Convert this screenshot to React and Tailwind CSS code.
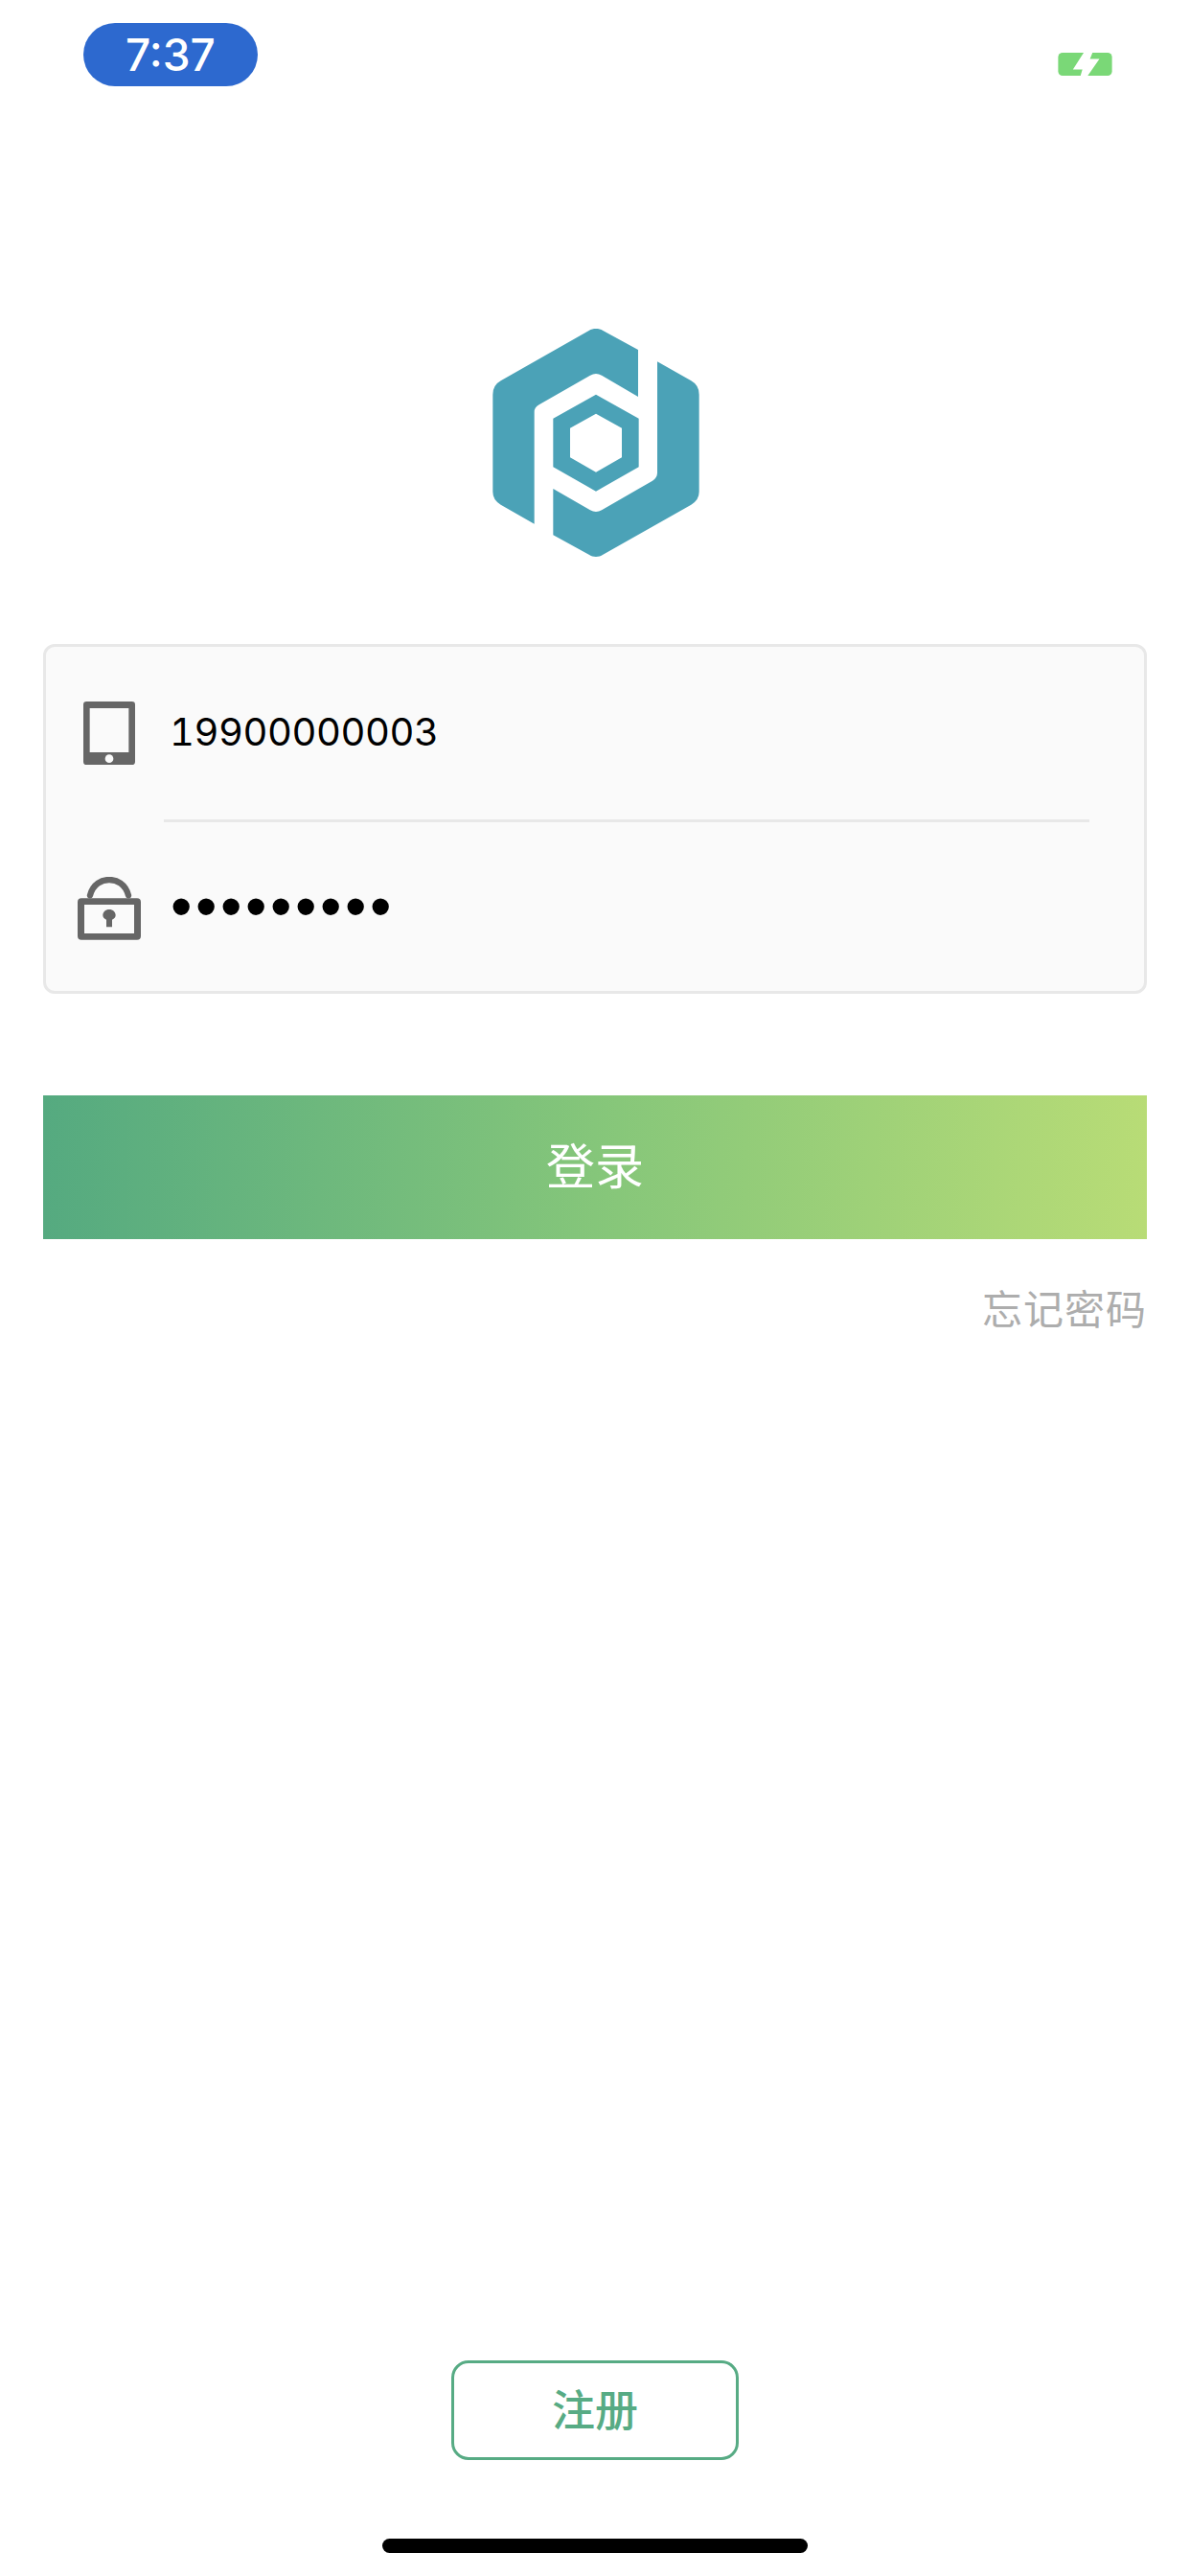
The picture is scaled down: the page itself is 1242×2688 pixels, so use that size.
import React from 'react';

const LOGO_LEFT = 'M555 135 L445 75 C432 67 414 67 401 75 L125 232 Q100 246 100 275 L100 580 Q100 606 125 620 L230 680 L230 330 Q230 315 245 307 L405 215 Q423 205 441 215 L555 282 Z';
const LOGO_RIGHT = 'M615 172 L721 232 Q746 246 746 275 L746 580 Q746 606 721 620 L445 776 C432 785 414 785 401 776 L289 715 L289 570 L405 637 Q423 647 441 637 L600 545 Q615 536 615 520 Z';
const LOGO_CORE = 'M423 275 L557 350 L557 502 L423 578 L289 502 L289 350 Z M423 335 L342 380 L342 472 L423 518 L504 472 L504 380 Z';

const Logo = () => (
  <svg viewBox="0 0 840 840" className="w-[280px] h-[280px]">
    <path d={LOGO_LEFT} fill="#4ba2b7" />
    <path d={LOGO_RIGHT} fill="#4ba2b7" />
    <path d={LOGO_CORE} fill="#4ba2b7" fillRule="evenodd" />
  </svg>
);

const Battery = () => (
  <svg viewBox="0 0 171 73" className="w-[57px] h-[24px]">
    <rect x="0" y="0" width="171" height="73" rx="14" fill="#7ad877" />
    <path d="M81 0 L47 53 L77 53 L71 73 L94 73 L131 20 L101 20 L109 0 Z" fill="#ffffff" />
  </svg>
);

const TabletIcon = () => (
  <svg viewBox="0 0 162 198" className="w-[54px] h-[66px]">
    <path
      fillRule="evenodd"
      fill="#666666"
      d="M10 0 H152 Q162 0 162 10 V188 Q162 198 152 198 H10 Q0 198 0 188 V10 Q0 0 10 0 Z M20 21 V159 H142 V21 Z"
    />
    <circle cx="81" cy="179" r="13" fill="#fafafa" />
  </svg>
);

const LockIcon = () => (
  <svg viewBox="0 0 198 198" className="w-[66px] h-[66px] mt-[4px]">
    <path d="M39 58 C48 22 76 9 99 9 C122 9 150 22 159 58" fill="none" stroke="#666666" strokeWidth="19" strokeLinecap="round" />
    <path
      fillRule="evenodd"
      fill="#666666"
      d="M12 67 H186 Q198 67 198 79 V185 Q198 197 186 197 H12 Q0 197 0 185 V79 Q0 67 12 67 Z M21 87 V177 H177 V87 Z"
    />
    <path d="M99 102 C111 102 119 110 119 120 C119 127 115 131 108 134 L108 157 H90 L90 134 C83 131 79 127 79 120 C79 110 87 102 99 102 Z" fill="#666666" />
  </svg>
);

const App = () => {
  return (
    <div className="w-[1242px] h-[2688px] bg-white flex flex-col font-['Liberation_Sans','Noto_Sans_CJK_SC',sans-serif]">
      {/* Status bar */}
      <div className="flex justify-between items-start pt-[24px] pl-[87px] pr-[81px]">
        <div className="w-[182px] h-[66px] rounded-[33px] bg-[#2d69cf] flex items-center justify-center text-white text-[46px] leading-none font-['Inter'] font-medium">
          7:37
        </div>
        <div className="mt-[31px] flex">
          <Battery />
        </div>
      </div>

      {/* Logo */}
      <div className="flex justify-center mt-[230px]">
        <Logo />
      </div>

      {/* Form */}
      <div className="mx-[45px] mt-[72px] h-[365px] border-[3px] border-[#e8e8e8] rounded-[12px] bg-[#fafafa] flex flex-col">
        <div className="h-[180px] flex items-center pl-[39px]">
          <TabletIcon />
          <span className="ml-[36px] mb-[3px] text-[40px] leading-none text-black font-['Inter'] tabular-nums tracking-[-0.45px]">19900000003</span>
        </div>
        <div className="h-[3px] ml-[123px] mr-[57px] bg-[#e8e8e8]" />
        <div className="h-[176px] flex items-center pl-[33px]">
          <LockIcon />
          <span className="ml-[31px] text-[64px] leading-none text-black tracking-[3.6px]">•••••••••</span>
        </div>
      </div>

      {/* Login */}
      <button className="mx-[45px] mt-[106px] h-[150px] bg-[linear-gradient(90deg,#55aa80,#85c67a,#b8dc76)] text-white text-[51px] leading-none flex items-center justify-center">
        登录
      </button>
      <div className="mx-[45px] mt-[45px] text-right text-[42px] tracking-[1px] leading-[60px] text-[#adadad]">忘记密码</div>

      {/* Register */}
      <div className="mt-auto flex justify-center">
        <button className="w-[300px] h-[104px] pt-[2px] border-[3px] border-[#57ab84] rounded-[18px] text-[#57ab84] text-[45px] font-medium leading-none flex items-center justify-center">
          注册
        </button>
      </div>

      {/* Home indicator */}
      <div className="mt-[82px] mb-[24px] w-[444px] h-[15px] rounded-full bg-black self-center" />
    </div>
  );
};

export default App;
